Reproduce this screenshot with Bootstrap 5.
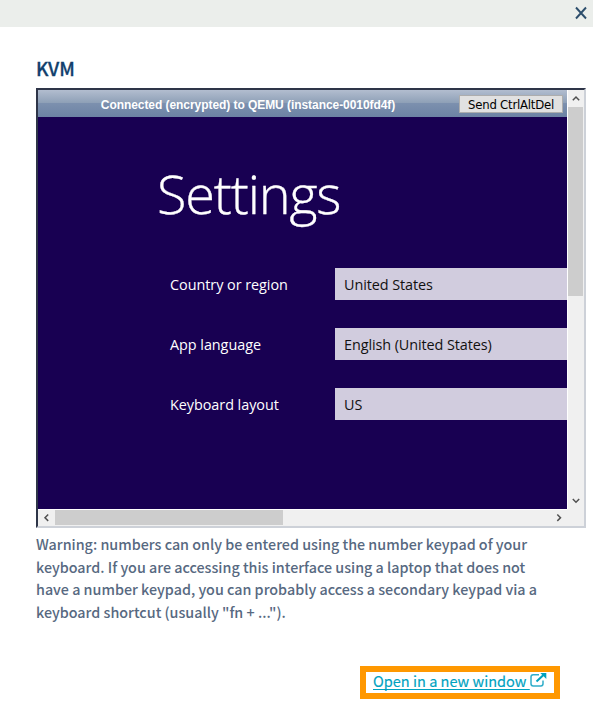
<!DOCTYPE html>
<html lang="en">
<head>
<meta charset="utf-8">
<meta name="viewport" content="width=device-width, initial-scale=1">
<title>KVM</title>
<link href="https://cdn.jsdelivr.net/npm/bootstrap@5.3.0/dist/css/bootstrap.min.css" rel="stylesheet">
<style>
body{font-family:"Noto Sans CJK JP","Noto Sans",sans-serif;color:#576981;min-height:728px;overflow:hidden}
svg{display:block}
.topbar{height:27px;background:#ebeeeb;padding-right:5px}
.close-btn{width:14px;height:14px;border:0;background:none;padding:0;margin-top:-1px}
.page{padding:28px 7px 0 36px}
.title{font-size:18.8px;font-weight:500;-webkit-text-stroke:.3px #113f6d;line-height:26px;color:#113f6d;margin:0 0 7px;letter-spacing:-.1px}
.frame{width:550px;height:440px;border:2px solid;border-color:#2e3548 #cdd1d8 #cdd1d8 #2e3548;display:grid;grid-template:419px 17px / 529px 17px}
.screen{background:#180052;overflow:hidden}
.status{height:27px;background:linear-gradient(#b2bdcf 0,#8d9fb6 49%,#7c90ae 50%,#6c82a4 100%);padding:0 4px 0 0}
.status-text{font:bold 12px/27px "Liberation Sans",Arial,sans-serif;color:#fff;width:420px;padding-top:3px;letter-spacing:-.06px}
.send{width:104px;height:18px;margin-top:1px;padding:0;border:1px solid #adadad;background:#e1e1e1;color:#000;font:13px/18px "DejaVu Sans Condensed","DejaVu Sans",sans-serif;font-stretch:condensed;letter-spacing:-.22px;white-space:nowrap}
.heading{font:300 54px/60px "Open Sans",sans-serif;-webkit-text-stroke:.35px #fff;color:#fff;margin:46px 0 0 119px;letter-spacing:-1.15px;width:max-content}
.fields{margin-top:45px;gap:28px}
.field-label{width:297px;padding-left:132px;color:#fff;font:14.4px/34px "Open Sans",sans-serif;height:32px;letter-spacing:-.04px;white-space:nowrap}
.field-value{height:32px;background:#d1ccde;color:#111;padding-left:9px;font:14.4px/33px "Open Sans",sans-serif;letter-spacing:-.08px;white-space:nowrap}
.scroll-y{background:#f0f0f0;border-left:1px solid #fff;display:flex;flex-direction:column;justify-content:space-between}
.scroll-x{background:#f0f0f0;border-top:1px solid #fff}
.thumb-y{width:15px;height:189px;background:#cdcdcd}
.thumb-x{width:228px;height:15px;background:#cdcdcd}
.note{font-size:14.32px;line-height:22.67px;font-weight:500;margin:5px 0 0;white-space:nowrap}
.note span{display:block;width:max-content}
.open-box{width:200px;height:33px;border:6px solid #ff9800;margin:42px 26px 0 auto;padding-left:7px}
.open-link{font-size:14.55px;line-height:20px;height:20px;margin-top:-1px;color:#00a2bf;-webkit-text-stroke:.15px #00a2bf;white-space:pre;text-underline-offset:2px;text-decoration-thickness:1px;text-decoration-skip-ink:none}
</style>
<script src="https://cdn.jsdelivr.net/npm/bootstrap@5.3.0/dist/js/bootstrap.bundle.min.js"></script>
</head>
<body class="bg-white">
<header class="topbar d-flex justify-content-end align-items-center">
  <button class="close-btn" aria-label="Close"><svg width="14" height="14" viewBox="0 0 14 14"><path d="M2 1.500 12 12.500M12 1.500 2 12.500" stroke="#2d4e6c" stroke-width="1.900"/></svg></button>
</header>
<main class="page">
  <h1 class="title">KVM</h1>
  <section class="frame">
    <div class="screen">
      <div class="status d-flex justify-content-between align-items-center">
        <div class="status-text text-center flex-shrink-0">Connected (encrypted) to QEMU (instance-0010fd4f)</div>
        <button class="send">Send CtrlAltDel</button>
      </div>
      <h2 class="heading">Settings</h2>
      <div class="fields d-flex flex-column">
        <div class="d-flex"><div class="field-label flex-shrink-0">Country or region</div><div class="field-value flex-grow-1">United States</div></div>
        <div class="d-flex"><div class="field-label flex-shrink-0">App language</div><div class="field-value flex-grow-1">English (United States)</div></div>
        <div class="d-flex"><div class="field-label flex-shrink-0">Keyboard layout</div><div class="field-value flex-grow-1">US</div></div>
      </div>
    </div>
    <div class="scroll-y">
      <div><svg width="16" height="17" viewBox="0 0 16 17"><path d="M4.8 10.2 8 7l3.2 3.2" fill="none" stroke="#505050" stroke-width="1.5"/></svg><div class="thumb-y"></div></div>
      <svg width="16" height="17" viewBox="0 0 16 17"><path d="M4.8 7 8 10.2 11.2 7" fill="none" stroke="#505050" stroke-width="1.5"/></svg>
    </div>
    <div class="scroll-x d-flex justify-content-between">
      <div class="d-flex"><svg width="17" height="16" viewBox="0 0 17 16"><path d="M10.2 4.5 7 7.7l3.2 3.2" fill="none" stroke="#505050" stroke-width="1.5"/></svg><div class="thumb-x"></div></div>
      <svg width="17" height="16" viewBox="0 0 17 16"><path d="M7.3 4.5l3.2 3.2-3.2 3.2" fill="none" stroke="#505050" stroke-width="1.5"/></svg>
    </div>
    <div class="scroll-x border-top-0"></div>
  </section>
  <p class="note"><span>Warning: numbers can only be entered using the number keypad of your</span><span>keyboard. If you are accessing this interface using a laptop that does not</span><span>have a number keypad, you can probably access a secondary keypad via a</span><span>keyboard shortcut (usually "fn + ...").</span></p>
  <div class="open-box d-flex">
    <a class="open-link" href="#">Open in a new window </a>
    <svg width="17" height="16" viewBox="0 0 17 16"><path d="M9 2.8H3.2Q1 2.8 1 5v6.800Q1 14 3.200 14h7.600Q13 14 13 11.800V8.500" fill="none" stroke="#30adc9" stroke-width="1.500"/><path d="M6.500 9.500 14 2.500" stroke="#00a2bf" stroke-width="2"/><path d="M10.300 1H16.300V7Z" fill="#00a2bf"/></svg>
  </div>
</main>
</body>
</html>
